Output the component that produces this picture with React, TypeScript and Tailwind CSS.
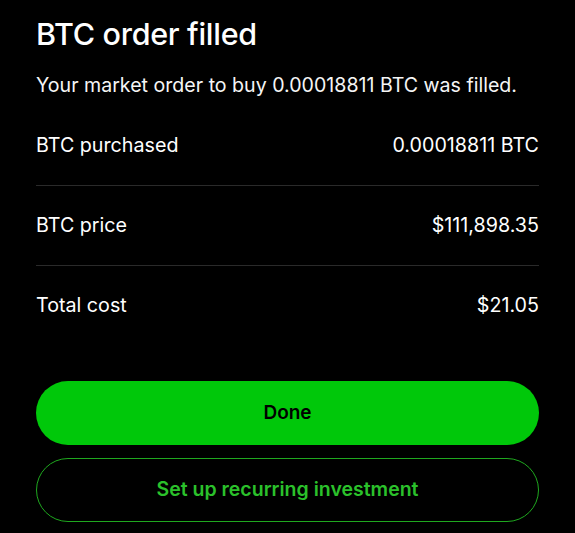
export default function App() {
  const rows = [
    { label: 'BTC purchased', value: '0.00018811 BTC' },
    { label: 'BTC price', value: '$111,898.35' },
    { label: 'Total cost', value: '$21.05' },
  ];

  return (
    <div className="w-[575px] h-[533px] bg-black text-white font-['Inter',sans-serif] overflow-hidden">
      <div className="px-9 pt-[14px]">
        <h1 className="text-[30.5px] leading-[40px] font-medium tracking-[-0.3px]">BTC order filled</h1>
        <p className="mt-[18px] text-[19.6px] leading-[26px] text-neutral-100">
          Your market order to buy 0.00018811 BTC was filled.
        </p>

        <div className="mt-[8px]">
          {rows.map((row, i) => (
            <div
              key={row.label}
              className={`flex items-center justify-between h-[80px] text-[19.7px] ${i < rows.length - 1 ? 'border-b border-[#2a2a2a]' : ''}`}
            >
              <span>{row.label}</span>
              <span>{row.value}</span>
            </div>
          ))}
        </div>

        <div className="mt-[35px] flex flex-col gap-[13px]">
          <button className="h-[64px] rounded-full bg-[#00c80a] text-black text-[19px] font-semibold">
            Done
          </button>
          <button className="h-[64px] rounded-full border border-[#1fa81f] text-[#2bc12b] text-[19.5px] font-semibold">
            Set up recurring investment
          </button>
        </div>
      </div>
    </div>
  );
}
